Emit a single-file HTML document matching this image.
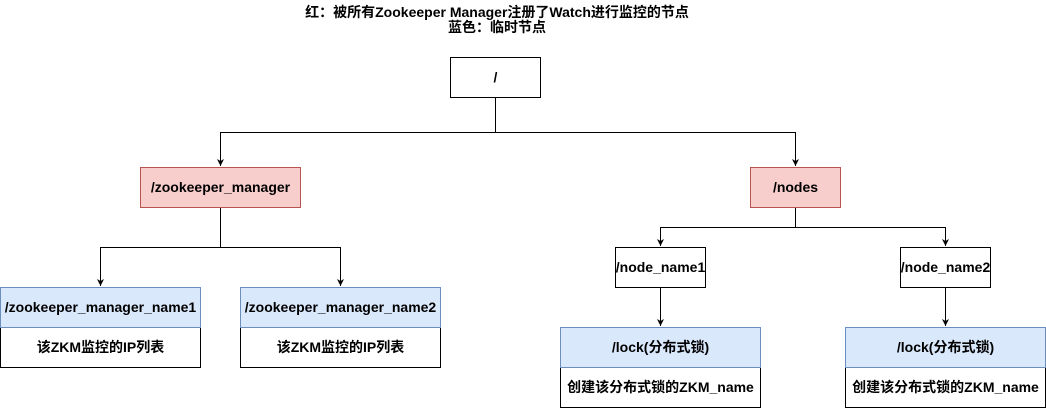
<!DOCTYPE html>
<html><head><meta charset="utf-8"><style>
html,body{margin:0;padding:0;background:#fff;width:1046px;height:408px;overflow:hidden}
svg text{font-family:"Liberation Sans","Noto Sans CJK SC",sans-serif;font-size:14px;font-weight:bold;fill:#000}
</style></head><body>
<svg width="1046" height="408" viewBox="0 0 1046 408" xmlns="http://www.w3.org/2000/svg">
<defs><marker id="a" markerWidth="8" markerHeight="8" refX="4" refY="7" orient="0" markerUnits="userSpaceOnUse"><path d="M0.5,0 L4,7 L7.5,0 L4,2 Z" fill="#000"/></marker></defs>
<text x="497" y="17" text-anchor="middle">红：被所有Zookeeper Manager注册了Watch进行监控的节点</text>
<text x="497" y="32" text-anchor="middle">蓝色：临时节点</text>
<g fill="none" stroke="#000" stroke-width="1">
<path d="M495.5 97V132.5H220.5V166" marker-end="url(#a)"/>
<path d="M495.5 132.5H795.5V166" marker-end="url(#a)"/>
<path d="M220.5 207V247.5H100.5V286" marker-end="url(#a)"/>
<path d="M220.5 247.5H340.5V286" marker-end="url(#a)"/>
<path d="M795.5 207V227.5H660.5V246" marker-end="url(#a)"/>
<path d="M795.5 227.5H945.5V246" marker-end="url(#a)"/>
<path d="M660.5 287V326" marker-end="url(#a)"/>
<path d="M945.5 287V326" marker-end="url(#a)"/>
</g>
<rect x="450.5" y="57.5" width="90" height="40" fill="#fff" stroke="#000"/>
<text x="495.5" y="82" text-anchor="middle">/</text>
<rect x="140.5" y="167.5" width="160" height="40" fill="#f8cecc" stroke="#b85450"/>
<text x="220.5" y="192" text-anchor="middle">/zookeeper_manager</text>
<rect x="750.5" y="167.5" width="90" height="40" fill="#f8cecc" stroke="#b85450"/>
<text x="795.5" y="192" text-anchor="middle">/nodes</text>
<rect x="0.5" y="327.5" width="200" height="40" fill="#fff" stroke="#000"/>
<rect x="0.5" y="287.5" width="200" height="40" fill="#dae8fc" stroke="#6c8ebf"/>
<text x="100.5" y="312" text-anchor="middle">/zookeeper_manager_name1</text>
<text x="100.5" y="352" text-anchor="middle">该ZKM监控的IP列表</text>
<rect x="240.5" y="327.5" width="200" height="40" fill="#fff" stroke="#000"/>
<rect x="240.5" y="287.5" width="200" height="40" fill="#dae8fc" stroke="#6c8ebf"/>
<text x="340.5" y="312" text-anchor="middle">/zookeeper_manager_name2</text>
<text x="340.5" y="352" text-anchor="middle">该ZKM监控的IP列表</text>
<rect x="615.5" y="247.5" width="90" height="40" fill="#fff" stroke="#000"/>
<text x="660.5" y="272" text-anchor="middle">/node_name1</text>
<rect x="900.5" y="247.5" width="90" height="40" fill="#fff" stroke="#000"/>
<text x="945.5" y="272" text-anchor="middle">/node_name2</text>
<rect x="560.5" y="367.5" width="200" height="40" fill="#fff" stroke="#000"/>
<rect x="560.5" y="327.5" width="200" height="40" fill="#dae8fc" stroke="#6c8ebf"/>
<text x="660.5" y="352" text-anchor="middle">/lock(分布式锁)</text>
<text x="660.5" y="392" text-anchor="middle">创建该分布式锁的ZKM_name</text>
<rect x="845.5" y="367.5" width="200" height="40" fill="#fff" stroke="#000"/>
<rect x="845.5" y="327.5" width="200" height="40" fill="#dae8fc" stroke="#6c8ebf"/>
<text x="945.5" y="352" text-anchor="middle">/lock(分布式锁)</text>
<text x="945.5" y="392" text-anchor="middle">创建该分布式锁的ZKM_name</text>
</svg>
</body></html>
